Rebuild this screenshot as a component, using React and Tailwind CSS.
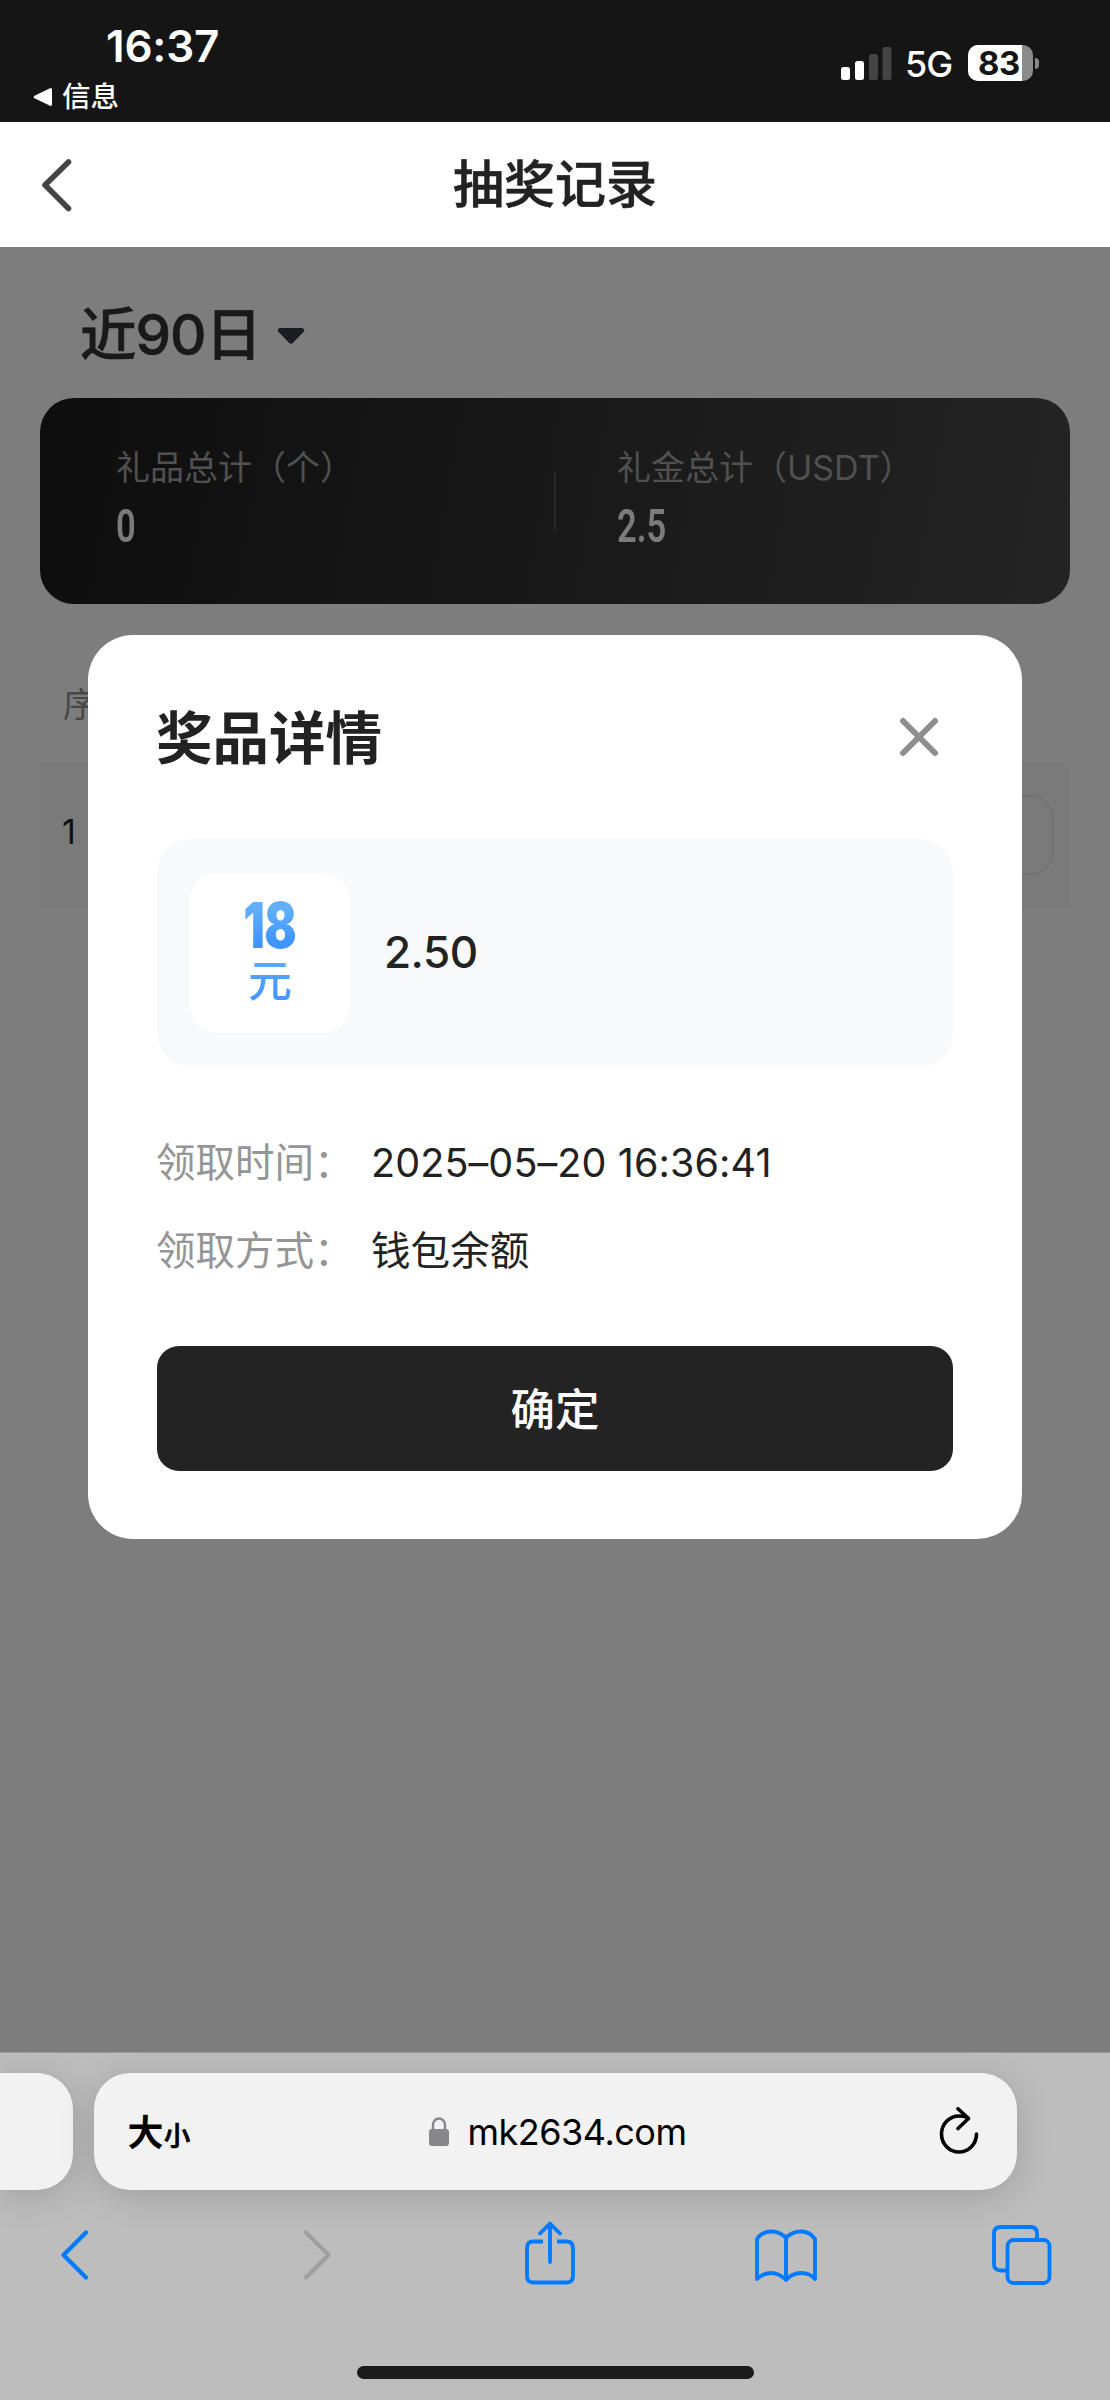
import React, { useState } from 'react';

const summary = [
  { label: '礼品总计（个）', value: '0' },
  { label: '礼金总计（USDT）', value: '2.5' },
];

const details = [
  { label: '领取时间：', value: '2025–05–20 16:36:41' },
  { label: '领取方式：', value: '钱包余额' },
];

function StatusBar() {
  return (
    <div className="h-[122px] bg-[#151515] text-white flex justify-between">
      <div className="pl-[33px] pt-[19px]">
        <div className="pl-[73px] text-[44px] leading-[54px] font-semibold tracking-[-0.2px]">16:37</div>
        <div className="flex items-center gap-[9px] pt-[3px]">
          <svg width="20" height="20" viewBox="0 0 20 20" fill="#fff">
            <path d="M17 1.2 1.5 8.7q-1.6 1.3 0 2.6L17 18.8q2 .5 2-1.6V2.8Q19 .7 17 1.2Z" />
          </svg>
          <span className="text-[28.500px] leading-[40px] pt-[1px] font-medium">信息</span>
        </div>
      </div>
      <div className="flex items-center h-[36px] mt-[45px] pr-[71px]">
        <svg width="51" height="33" viewBox="0 0 51 33" className="mt-[1px]">
          <rect x="0" y="20" width="9" height="13" rx="2.5" fill="#fff" />
          <rect x="14" y="14" width="9" height="19" rx="2.5" fill="#fff" />
          <rect x="28" y="7" width="9" height="26" rx="2.5" fill="#444" />
          <rect x="41.500" y="0" width="9" height="33" rx="2.5" fill="#444" />
        </svg>
        <span className="w-[48px] ml-[13px] mt-[2px] text-[36px] leading-[36px] font-medium tracking-[-1px]">5G</span>
        <div className="relative ml-[15px] w-[65px] h-[36px] rounded-[10px] bg-[#8a8a8a]">
          <div className="w-[54px] h-[36px] rounded-l-[10px] bg-white" />
          <span className="absolute left-[10px] top-0 text-[33px] leading-[36px] font-bold text-[#151515] tracking-[-0.5px]">83</span>
        </div>
        <div className="w-[4px] h-[11px] ml-[2px] rounded-r-full bg-[#8a8a8a]" />
      </div>
    </div>
  );
}

function Header() {
  return (
    <div className="h-[125px] bg-white px-[40px] flex items-center justify-between">
      <svg width="34" height="56" viewBox="0 0 34 56" fill="none" stroke="#444" strokeWidth="5.6" strokeLinecap="round" strokeLinejoin="round">
        <path d="M28.500 5 5 28l23.500 23.500" />
      </svg>
      <h1 className="text-[51px] leading-[60px] font-medium text-[#222] [-webkit-text-stroke:0.6px_#222]">抽奖记录</h1>
      <div className="w-[34px]" />
    </div>
  );
}

function Records() {
  return (
    <div className="h-full bg-[#fafafa] px-[40px] pt-[51px]">
      <div className="flex items-center h-[70px] pl-[40px] mb-[30px]">
        <span className="text-[56.500px] leading-[70px] pt-[3px] font-medium text-[#333] tracking-[-1px] [-webkit-text-stroke:0.6px_#333]">近90日</span>
        <svg width="28" height="18" viewBox="0 0 28 18" fill="#343c44" className="ml-[16px] mt-[6px]">
          <path d="M3 1h22q3.500 1 1.500 4L16 15.800q-2 1.800-4 0L1.500 5Q-.5 2 3 1Z" />
        </svg>
      </div>
      <div className="h-[206px] rounded-[34px] bg-[linear-gradient(100deg,#1c1c1c,#484848)] flex items-center">
        {summary.map((item, i) => (
          <React.Fragment key={item.label}>
            {i > 0 && <div className="w-[2px] h-[58px] bg-[#555]" />}
            <div className={i > 0 ? 'pl-[61px]' : 'pl-[76px] w-[514px]'}>
              <div className="text-[34px] leading-[44px] text-[#a0a0a0] -mt-[3px]">{item.label}</div>
              <div className="font-[Roboto] text-[46px] leading-[56px] mt-[8px] font-semibold text-[#f6f6f6] origin-left scale-x-[0.75]">{item.value}</div>
            </div>
          </React.Fragment>
        ))}
      </div>
      <div className="h-[159px] pl-[23px] pt-[79px] text-[34px] leading-[44px] text-[#8e8e8e]">序号</div>
      <div className="h-[143px] bg-[#f4f4f4] pl-[22px] pr-[16px] flex items-center justify-between text-[34px] text-[#222]">
        <span className="pb-[6px]">1</span>
        <div className="w-[150px] h-[80px] rounded-[24px] border-2 border-[#e6e6e6]" />
      </div>
    </div>
  );
}

function PrizeDialog({ onClose }) {
  return (
    <div className="w-[934px] h-[904px] mt-[388px] rounded-[45px] bg-white pl-[69px] pr-[69px]">
      <div className="flex items-center justify-between h-[204px] pr-[13px]">
        <h2 className="text-[56.500px] leading-[70px] pt-[3px] -ml-[1px] font-semibold text-[#222]">奖品详情</h2>
        <button onClick={onClose}>
          <svg width="42" height="42" viewBox="0 0 42 42" stroke="#8e8e8e" strokeWidth="6" strokeLinecap="round">
            <path d="M5 5l32 32M37 5 5 37" />
          </svg>
        </button>
      </div>
      <div className="h-[228px] rounded-[34px] bg-[#f7f9fb] pl-[33px] flex items-center">
        <div className="w-[160px] h-[160px] rounded-[27px] bg-white flex flex-col items-center">
          <span className="text-[63px] leading-[60px] mt-[22px] font-black text-transparent bg-clip-text bg-linear-to-b from-[#62b0fd] from-20% to-[#3f94ff] to-80% scale-x-[0.76] tracking-[-1px]">18</span>
          <span className="text-[44px] leading-[50px] mt-[1px] font-medium text-transparent bg-clip-text bg-linear-to-b from-[#5cabfd] to-[#3f94ff]">元</span>
        </div>
        <span className="ml-[34px] pb-[2px] text-[44px] font-medium text-[#222] tracking-[-0.5px]">2.50</span>
      </div>
      <div className="h-[279px] pt-[53px]">
        {details.map((d) => (
          <div key={d.label} className="flex h-[88px] items-center text-[39.500px]">
            <span className="w-[214px] -ml-[1px] mr-[1px] text-[#959595]">{d.label}</span>
            <span className="text-[#222] tracking-[0.1px]">{d.value}</span>
          </div>
        ))}
      </div>
      <button
        onClick={onClose}
        className="w-full h-[125px] pt-[4px] rounded-[22px] bg-[#232323] text-white text-[44.500px] font-medium"
      >
        确定
      </button>
    </div>
  );
}

function BrowserBar() {
  return (
    <div className="h-[348px] bg-[#bdbdbd] overflow-hidden border-t border-[#999]">
      <div className="flex gap-[21px] pt-[20px]">
        <div className="w-[72.500px] h-[117px] rounded-r-[36px] bg-[#f2f2f2] shadow-[0_6px_36px_rgba(0,0,0,0.16)]" />
        <div className="w-[923px] h-[117px] rounded-[36px] bg-[#f2f2f2] shadow-[0_6px_36px_rgba(0,0,0,0.16)] flex items-center justify-between pl-[34px] pr-[36px] text-black">
          <div className="w-[64px] flex items-baseline font-bold whitespace-nowrap pt-[2px]">
            <span className="text-[36px]">大</span>
            <span className="text-[27px]">小</span>
          </div>
          <div className="flex items-center mr-[12px]">
            <svg width="21" height="30" viewBox="0 0 21 30" className="mr-[18px]">
              <rect x="0" y="12" width="20" height="17" rx="3" fill="#86868b" />
              <path d="M4 13V8a6 6.500 0 0 1 12 0v5" fill="none" stroke="#86868b" strokeWidth="2.400" />
            </svg>
            <span className="text-[36px] leading-[48px] mr-[3px] tracking-[-0.5px]">mk2634.com</span>
          </div>
          <svg width="42" height="50" viewBox="0 0 42 50" fill="none" stroke="#000" strokeWidth="3.600" strokeLinecap="round" strokeLinejoin="round">
            <path d="M38.500 27A17.500 18 0 1 1 21 9Q26 9 29.500 10.500M20 1.800l10.500 9.700L20 21.500" />
          </svg>
        </div>
      </div>
      <div className="flex items-center h-[70px] mt-[30px] pl-[59px]">
        <svg width="31" height="50" viewBox="0 0 31 50" fill="none" stroke="#007aff" strokeWidth="4.200" strokeLinecap="round" strokeLinejoin="round">
          <path d="M27 2.500 4.500 25 27 47.500" />
        </svg>
        <svg width="31" height="50" viewBox="0 0 31 50" fill="none" stroke="#a0a0a0" strokeWidth="4.200" strokeLinecap="round" strokeLinejoin="round" className="ml-[212px]">
          <path d="M4 2.500 26.500 25 4 47.500" />
        </svg>
        <svg width="50" height="64" viewBox="0 0 50 64" fill="none" stroke="#007aff" strokeWidth="3.800" className="ml-[192px] -mt-[4px]">
          <path d="M18 20.500H8.500Q2 20.500 2 27v28q0 6.500 6.500 6.500h33Q48 61.500 48 55V27q0-6.500-6.500-6.500H32" />
          <path d="M25 41V3M15 12.500 25 2.500l10 10" strokeLinecap="round" strokeLinejoin="round" />
        </svg>
        <svg width="62" height="53" viewBox="0 0 62 53" fill="none" stroke="#007aff" strokeWidth="3.800" strokeLinejoin="round" className="ml-[180px]">
          <path d="M31 9Q25 2.500 16 2.500T2 10v40q6-6 14-6t15 7q6-7 15-7t14 6V10q-5-7.500-14-7.500T31 9ZM31 9v42" />
        </svg>
        <svg width="60" height="60" viewBox="0 0 60 60" fill="none" stroke="#007aff" strokeWidth="3.800" className="ml-[175px]">
          <path d="M14 45.500H9Q2 45.500 2 39V8.500Q2 2 9 2h29.500Q45 2 45 8.500V14" />
          <rect x="15.500" y="15" width="42" height="43" rx="6" />
        </svg>
      </div>
      <div className="w-[397px] h-[13px] mx-auto mt-[76px] rounded-full bg-[#1a1a1a]" />
    </div>
  );
}

function App() {
  const [open, setOpen] = useState(true);

  return (
    <div className="w-[1110px] h-[2400px] overflow-hidden flex flex-col font-[Inter,'Noto_Sans_CJK_SC',sans-serif]">
      <StatusBar />
      <Header />
      <div className="relative h-[1805px]">
        <Records />
        {open && (
          <div className="absolute inset-0 bg-black/50 flex items-start justify-center">
            <PrizeDialog onClose={() => setOpen(false)} />
          </div>
        )}
      </div>
      <BrowserBar />
    </div>
  );
}

export default App;
